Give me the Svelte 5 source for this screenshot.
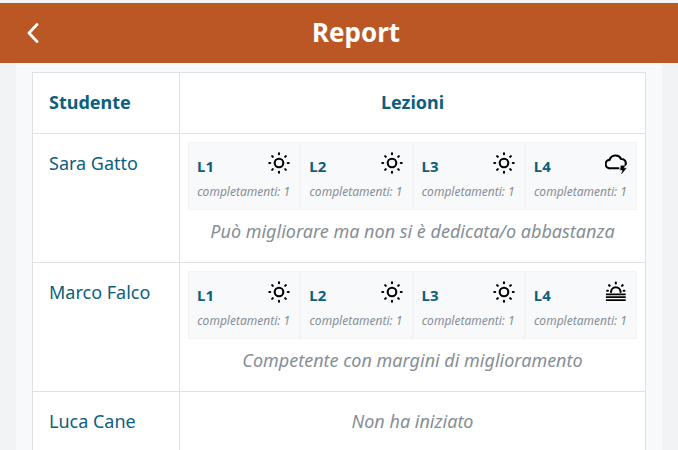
<script>
	const students = [
		{
			name: 'Sara Gatto',
			lessons: [['L1', 'sun'], ['L2', 'sun'], ['L3', 'sun'], ['L4', 'cloud']],
			note: 'Può migliorare ma non si è dedicata/o abbastanza'
		},
		{
			name: 'Marco Falco',
			lessons: [['L1', 'sun'], ['L2', 'sun'], ['L3', 'sun'], ['L4', 'haze']],
			note: 'Competente con margini di miglioramento'
		},
		{ name: 'Luca Cane', lessons: [], note: 'Non ha iniziato' }
	];
</script>

{#snippet rays()}
	<path d="M12 1.4v1M12 21.6v1M1.4 12h1M21.6 12h1M4.5 4.5l.7.7M18.8 18.8l.7.7M4.5 19.5l.7-.7M18.8 5.2l.7-.7" />
{/snippet}

<div class="page">
	<header>
		<svg class="back" viewBox="0 0 12 20" width="12" height="20" aria-hidden="true">
			<path d="M10 1.5 2 10l8 8.5" />
		</svg>
		<h1>Report</h1>
	</header>
	<div class="shell">
		<main>
			<table>
				<thead>
					<tr>
						<th class="who">Studente</th>
						<th>Lezioni</th>
					</tr>
				</thead>
				<tbody>
					{#each students as s}
						<tr>
							<td class="who name">{s.name}</td>
							<td class="detail">
								{#if s.lessons.length}
									<div class="lessons">
										{#each s.lessons as [code, icon]}
											<div class="lesson">
												<div class="top">
													<b>{code}</b>
													<svg viewBox="0 0 24 24" width="22" height="22" aria-hidden="true">
														{#if icon === 'sun'}
															<circle cx="12" cy="12" r="4.7" />
															{@render rays()}
														{:else if icon === 'cloud'}
															<path d="M14.6 17.8H5.6a4.6 4.6 0 0 1-.6-9.2A6.8 6.8 0 0 1 17.6 7.6a4.6 4.6 0 0 1 4.8 6.2" />
															<path class="fill" d="M17.5 15h4.2l-1.4 2.6h2.9l-5.2 6.4 1.3-4.4h-2.6z" />
														{:else}
															<path d="M6.6 12a5.2 5.2 0 0 1 10.4 0" />
															<path d="M11.8 1.6v1M4.4 4.6l.7.7M18.6 5.3l.7-.7M2.4 10.6h.8M20.4 10.6h.8" />
															<path class="line" d="M1 14.6h21.6M1 17.6h21.6M1 20.8h21.6" />
														{/if}
													</svg>
												</div>
												<div class="count">completamenti: 1</div>
											</div>
										{/each}
									</div>
								{/if}
								<p class="note">{s.note}</p>
							</td>
						</tr>
					{/each}
				</tbody>
			</table>
		</main>
	</div>
</div>

<style>
	:global(body) {
		margin: 0;
		background: #f1f3f5;
		overflow: hidden;
	}

	.page {
		width: 678px;
		height: 450px;
		padding-top: 3px;
		box-sizing: border-box;
		overflow: hidden;
		font-family: "Noto Sans", sans-serif;
	}

	header {
		position: relative;
		height: 60px;
		background: #bb5724;
		color: #fff;
		display: flex;
		align-items: center;
		justify-content: center;
		padding-left: 34px;
		box-sizing: border-box;
	}

	.back {
		position: absolute;
		left: 27px;
		top: 20px;
	}

	.back path {
		fill: none;
		stroke: #fff;
		stroke-width: 2.8;
		stroke-linecap: round;
		stroke-linejoin: round;
	}

	h1 {
		margin: 0 0 3px;
		font-size: 26px;
		font-weight: 700;
		line-height: 34px;
	}

	.shell {
		margin: 0 16px;
		padding: 9px 16px 0;
		background: #f8f9fa;
		height: 400px;
	}

	main {
		background: #fff;
	}

	table {
		width: 100%;
		table-layout: fixed;
		border-collapse: collapse;
		color: #0b5f80;
	}

	th, td {
		border: 1px solid #dee2e6;
		padding: 0;
		box-sizing: border-box;
	}

	th {
		height: 61px;
		font-size: 18px;
		font-weight: 700;
		text-align: center;
		padding-bottom: 2px;
	}

	.who {
		width: 147px;
	}

	th.who {
		text-align: left;
		padding-left: 16px;
	}

	.name {
		vertical-align: top;
		padding: 16px 0 0 16px;
		font-size: 18px;
		line-height: 27px;
	}

	.detail {
		padding: 8px 8px 0;
		height: 129px;
		vertical-align: top;
	}

	.lessons {
		display: grid;
		grid-template-columns: repeat(4, 1fr);
		gap: 2px;
		height: 68px;
		border: 1px solid #f1f3f5;
		background: #f1f3f5;
		box-sizing: border-box;
	}

	.lesson {
		background: #f8f9fa;
		padding: 9px 9px 0 8px;
		min-width: 0;
	}

	.top {
		display: flex;
		align-items: center;
		justify-content: space-between;
		height: 22px;
	}

	.top b {
		font-size: 15px;
		font-weight: 700;
		padding-top: 5px;
	}

	svg path, svg circle {
		fill: none;
		stroke: #000;
		stroke-width: 2.3;
		stroke-linecap: round;
		stroke-linejoin: round;
	}

	svg .line {
		stroke-width: 1.8;
		stroke-linecap: butt;
	}

	svg .fill {
		fill: #000;
		stroke-width: 0.4;
	}

	.count {
		margin-top: 9px;
		font-size: 12px;
		line-height: 17px;
		font-style: italic;
		color: #868e96;
		text-align: center;
		white-space: nowrap;
	}

	.note {
		margin: 8px 0 0;
		font-size: 18px;
		line-height: 26px;
		font-style: italic;
		color: #868e96;
		text-align: center;
		white-space: nowrap;
	}
</style>
